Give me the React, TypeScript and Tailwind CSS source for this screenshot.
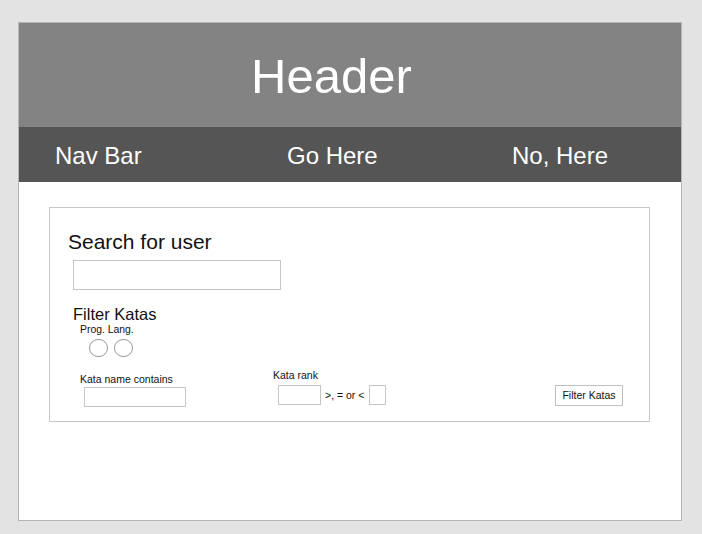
const navItems = [
  { label: 'Nav Bar', width: 'w-[232px]' },
  { label: 'Go Here', width: 'w-[225px]' },
  { label: 'No, Here', width: '' },
];

const App = () => {
  return (
    <div className="w-[702px] h-[534px] bg-[#e3e3e3] pt-[22px] pl-[18px] font-['Liberation_Sans',Arial,sans-serif] text-[#111]">
      <div className="w-[664px] h-[499px] border border-[#b5b5b5] bg-white flex flex-col">
        {/* header */}
        <div className="h-[104px] bg-[#838383] pt-[29px] pl-[232px]">
          <h1 className="text-[49px] leading-none text-white">Header</h1>
        </div>

        {/* nav */}
        <nav className="h-[55px] bg-[#555555] pt-[17px] pl-[36px] flex">
          {navItems.map((item) => (
            <a key={item.label} href="#" className={`${item.width} text-[24px] leading-none text-white`}>
              {item.label}
            </a>
          ))}
        </nav>

        {/* search / filter panel */}
        <div className="mt-[25px] ml-[30px] w-[601px] h-[215px] border border-[#c8c8c8] flex flex-col pt-[23px]">
          <h2 className="ml-[18px] text-[21px] leading-[21px]">Search for user</h2>
          <input className="mt-[8px] ml-[23px] w-[208px] h-[30px] border border-[#c6c6c6] outline-none" />

          <h3 className="mt-[16px] ml-[23px] text-[16.5px] leading-none">Filter Katas</h3>
          <div className="mt-[2px] ml-[30px] text-[10.4px] leading-none">Prog. Lang.</div>
          <div className="mt-[4px] ml-[39px] flex gap-[6px]">
            <span className="w-[19px] h-[18px] rounded-full border border-[#999]" />
            <span className="w-[19px] h-[18px] rounded-full border border-[#999]" />
          </div>

          <div className="mt-[13px] flex items-start text-[10.5px] leading-none">
            <div className="ml-[30px] mt-[4px] w-[193px]">
              <div>Kata name contains</div>
              <input className="mt-[3px] ml-[4px] w-[102px] h-[20px] border border-[#c6c6c6] outline-none" />
            </div>
            <div>
              <div>Kata rank</div>
              <div className="mt-[5px] ml-[5px] flex items-center">
                <input className="w-[43px] h-[20px] border border-[#c6c6c6] outline-none" />
                <span className="ml-[4px]">&gt;, = or &lt;</span>
                <input className="ml-[5px] w-[17px] h-[20px] border border-[#c6c6c6] outline-none" />
              </div>
            </div>
            <button className="mt-[15px] ml-auto mr-[26px] w-[68px] h-[21px] border border-[#c0c0c0] bg-white text-[10.5px] leading-none">
              Filter Katas
            </button>
          </div>
        </div>
      </div>
    </div>
  );
};

export default App;
